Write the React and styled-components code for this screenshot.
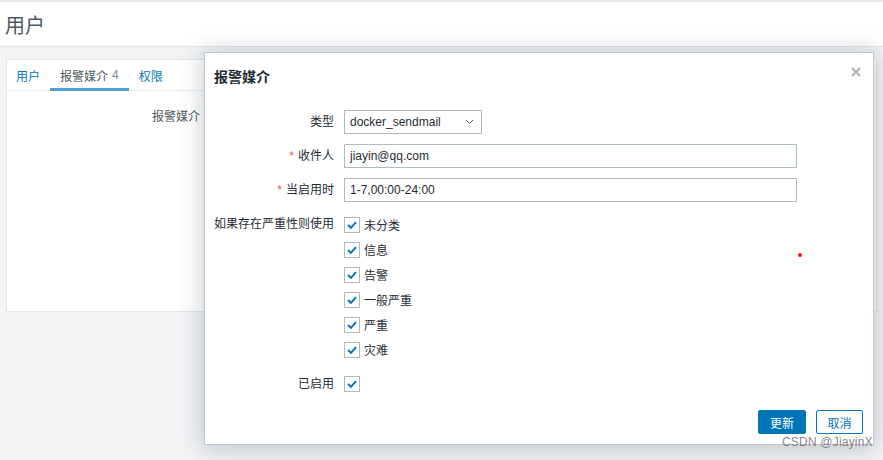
import React from 'react'
import styled, { createGlobalStyle } from 'styled-components'

const GlobalStyle = createGlobalStyle`
  html, body {
    margin: 0;
    padding: 0;
    background: #f2f3f5;
    font-family: "Liberation Sans", Arial, "Noto Sans CJK SC", sans-serif;
    font-size: 12px;
    color: #1f2c33;
  }
`

const Page = styled.div`
  position: relative;
  width: 883px;
  height: 460px;
  overflow: hidden;
  background: #f2f3f5;
`

const Header = styled.div`
  height: 44px;
  border-top: 2px solid #e6e8ea;
  border-bottom: 1px solid #e4e7ea;
  background: #fff;
  display: flex;
  align-items: center;
  padding-left: 5px;
`

const Title = styled.h1`
  margin: 0;
  font-size: 20px;
  font-weight: normal;
  color: #4f5a60;
`

const Content = styled.div`
  padding: 12px 6px;
`

const Panel = styled.div`
  background: #fff;
  border: 1px solid #e0e4e7;
  height: 251px;
`

const Tabs = styled.div`
  display: flex;
  height: 30px;
  border-bottom: 1px solid #ebeef0;
`

const Tab = styled.div`
  padding: 2px 10px 0;
  display: flex;
  align-items: center;
  color: ${p => (p.$active ? '#4f5a60' : '#0275b8')};
  border-bottom: 3px solid ${p => (p.$active ? '#4f9fd0' : 'transparent')};
  margin-bottom: -1px;
  &:first-child { padding-left: 9px; }
  span { color: #768d99; margin-left: 4px; }
`

const PanelBody = styled.div`
  display: grid;
  grid-template-columns: 193px 1fr;
  column-gap: 10px;
  padding-top: 14px;
`

const PanelLabel = styled.div`
  text-align: right;
  line-height: 24px;
  color: #4f5a60;
`

const Dialog = styled.div`
  position: absolute;
  left: 204px;
  top: 52px;
  width: 668px;
  height: 391px;
  background: #fff;
  border: 1px solid #bcc7cf;
  box-shadow: 0 2px 22px 2px rgba(60, 75, 90, 0.28);
  display: flex;
  flex-direction: column;
`

const DialogHead = styled.div`
  box-sizing: border-box;
  display: flex;
  justify-content: space-between;
  align-items: flex-start;
  padding: 13px 12px 0 9px;
  height: 43px;
`

const DialogTitle = styled.h4`
  margin: 0;
  font-size: 14px;
  font-weight: bold;
  color: #1f2c33;
`

const CloseBtn = styled.div`
  width: 10px;
  height: 10px;
  margin-top: 1px;
  svg { display: block; }
`

const Form = styled.div`
  display: grid;
  grid-template-columns: 120px 1fr;
  column-gap: 10px;
  row-gap: 10px;
  padding: 14px 9px 0;
  align-items: start;
`

const Label = styled.div`
  text-align: right;
  line-height: ${p => p.$lh || '24px'};
  color: #1f2c33;
  white-space: nowrap;
`

const Req = styled.span`
  color: #e45959;
  margin-right: 4px;
`

const SelectBox = styled.div`
  width: 138px;
  height: 24px;
  box-sizing: border-box;
  border: 1px solid #acbbc2;
  display: flex;
  align-items: center;
  justify-content: space-between;
  padding: 0 7px 0 5px;
  color: #1f2c33;
`

const TextInput = styled.div`
  width: 453px;
  height: 24px;
  box-sizing: border-box;
  border: 1px solid #acbbc2;
  display: flex;
  align-items: center;
  padding: 0 5px;
  color: #1f2c33;
`

const CheckList = styled.div`
  display: flex;
  flex-direction: column;
`

const CheckRow = styled.label`
  display: flex;
  align-items: center;
  height: ${p => p.$h || '25px'};
  gap: 4px;
`

const Box = styled.span`
  width: 14px;
  height: 14px;
  border: 1px solid #acbbc2;
  background: #fff;
  display: flex;
  align-items: center;
  justify-content: center;
  svg { display: block; }
`

const Footer = styled.div`
  margin-top: auto;
  display: flex;
  justify-content: flex-end;
  gap: 10px;
  padding: 0 10px 10px;
`

const Button = styled.button`
  height: 24px;
  width: ${p => (p.$alt ? '47px' : '48px')};
  box-sizing: border-box;
  font-family: inherit;
  font-size: 12px;
  border: 1px solid #0275b8;
  border-radius: 2px;
  background: ${p => (p.$alt ? '#fff' : '#0275b8')};
  color: ${p => (p.$alt ? '#0275b8' : '#fff')};
  padding: 0;
`

const Dot = styled.div`
  position: absolute;
  left: 798px;
  top: 253px;
  width: 4px;
  height: 4px;
  border-radius: 50%;
  background: #e3161c;
`

const Watermark = styled.div`
  position: absolute;
  left: 782px;
  top: 435px;
  font-size: 12px;
  color: rgba(110, 110, 110, 0.85);
  letter-spacing: 0.2px;
`

const Check = () => (
  <Box>
    <svg width="10" height="8" viewBox="0 0 10 8">
      <path d="M1 4 L4 6.8 L9 1.2" fill="none" stroke="#0275b8" strokeWidth="2" />
    </svg>
  </Box>
)

const severities = ['未分类', '信息', '告警', '一般严重', '严重', '灾难']

export default function App() {
  return (
    <Page>
      <GlobalStyle />
      <Header>
        <Title>用户</Title>
      </Header>
      <Content>
        <Panel>
          <Tabs>
            <Tab>用户</Tab>
            <Tab $active>报警媒介<span>4</span></Tab>
            <Tab>权限</Tab>
          </Tabs>
          <PanelBody>
            <PanelLabel>报警媒介</PanelLabel>
            <div />
          </PanelBody>
        </Panel>
      </Content>

      <Dialog>
        <DialogHead>
          <DialogTitle>报警媒介</DialogTitle>
          <CloseBtn>
            <svg width="10" height="10" viewBox="0 0 10 10">
              <path d="M1 1 L9 9 M9 1 L1 9" stroke="#a9b4bb" strokeWidth="2" />
            </svg>
          </CloseBtn>
        </DialogHead>
        <Form>
          <Label>类型</Label>
          <SelectBox>
            docker_sendmail
            <svg width="9" height="6" viewBox="0 0 9 6">
              <path d="M1 1 L4.5 4.5 L8 1" fill="none" stroke="#4f5a60" strokeWidth="1" />
            </svg>
          </SelectBox>

          <Label><Req>*</Req>收件人</Label>
          <TextInput>jiayin@qq.com</TextInput>

          <Label><Req>*</Req>当启用时</Label>
          <TextInput>1-7,00:00-24:00</TextInput>

          <Label $lh="25px">如果存在严重性则使用</Label>
          <CheckList>
            {severities.map(s => (
              <CheckRow key={s}>
                <Check />
                {s}
              </CheckRow>
            ))}
          </CheckList>

          <Label>已启用</Label>
          <CheckRow $h="24px">
            <Check />
          </CheckRow>
        </Form>
        <Footer>
          <Button>更新</Button>
          <Button $alt>取消</Button>
        </Footer>
      </Dialog>

      <Dot />
      <Watermark>CSDN @JiayinX</Watermark>
    </Page>
  )
}
